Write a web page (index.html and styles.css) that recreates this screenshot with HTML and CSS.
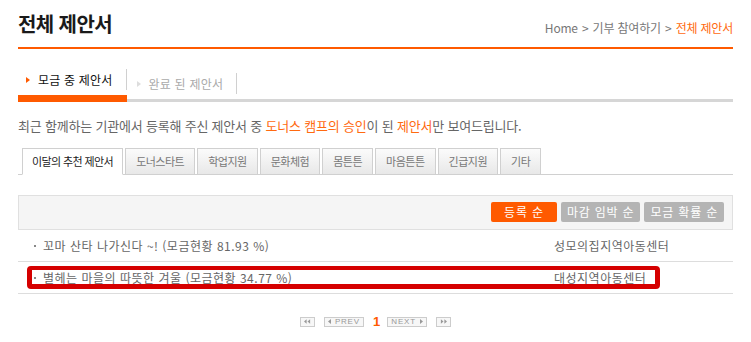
FILE: index.html
```html
<!DOCTYPE html>
<html lang="ko">
<head>
    <meta charset="UTF-8">
    <meta name="viewport" content="width=device-width, initial-scale=1.0">
    <title>전체 제안서</title>
    <link rel="stylesheet" href="styles.css">
</head>
<body>
    <div class="page">
        <div class="head">
            <h1>전체 제안서</h1>
            <p class="path">Home <span class="gt">&gt;</span> 기부 참여하기 <span class="gt">&gt;</span> <em>전체 제안서</em></p>
        </div>

        <ul class="status-tabs">
            <li class="on"><a href="#"><i class="arrow"></i>모금 중 제안서</a></li>
            <li><a href="#"><i class="arrow"></i>완료 된 제안서</a></li>
        </ul>

        <p class="intro">최근 함께하는 기관에서 등록해 주신 제안서 중 <em>도너스 캠프의 승인</em>이 된 <em>제안서</em>만 보여드립니다.</p>

        <ul class="cat-tabs">
            <li class="on"><a href="#">이달의 추천 제안서</a></li>
            <li><a href="#">도너스타트</a></li>
            <li><a href="#">학업지원</a></li>
            <li><a href="#">문화체험</a></li>
            <li><a href="#">몸튼튼</a></li>
            <li><a href="#">마음튼튼</a></li>
            <li><a href="#">긴급지원</a></li>
            <li><a href="#">기타</a></li>
        </ul>

        <div class="sort-bar">
            <button class="sort on">등록 순</button>
            <button class="sort">마감 임박 순</button>
            <button class="sort">모금 확률 순</button>
        </div>

        <ul class="list">
            <li class="row">
                <a class="title" href="#">꼬마 산타 나가신다 ~! (모금현황 81.93 %)</a>
                <span class="org">성모의집지역아동센터</span>
            </li>
            <li class="row hover">
                <a class="title" href="#">별헤는 마을의 따뜻한 겨울 (모금현황 34.77 %)</a>
                <span class="org">대성지역아동센터</span>
                <span class="mark"></span>
            </li>
        </ul>

        <div class="paging">
            <a class="pg-btn first" href="#"><svg width="8" height="5" viewBox="0 0 8 5"><path d="M0 2.5L3 0V5Z M4 2.5L7 0V5Z" fill="#999"/></svg></a>
            <a class="pg-btn word" href="#"><svg width="4" height="5" viewBox="0 0 4 5"><path d="M0 2.5L3 0V5Z" fill="#999"/></svg>PREV</a>
            <strong class="current">1</strong>
            <a class="pg-btn word" href="#">NEXT<svg width="4" height="5" viewBox="0 0 4 5"><path d="M4 2.5L1 0V5Z" fill="#999"/></svg></a>
            <a class="pg-btn last" href="#"><svg width="8" height="5" viewBox="0 0 8 5"><path d="M4 2.5L1 0V5Z M8 2.5L5 0V5Z" fill="#999"/></svg></a>
        </div>
    </div>
</body>
</html>
```

FILE: styles.css
```css
* {
    box-sizing: border-box;
}
body {
    margin: 0;
    background: #fff;
    font-family: "Noto Sans CJK KR", "Noto Sans", sans-serif;
    color: #666;
}
a {
    color: inherit;
    text-decoration: none;
}
ul {
    list-style: none;
    margin: 0;
    padding: 0;
}
em {
    font-style: normal;
    color: #ff6a10;
}
.page {
    padding: 0 18px;
}

/* title + breadcrumb */
.head {
    display: flex;
    justify-content: space-between;
    align-items: flex-start;
    height: 49px;
    padding-top: 10px;
    border-bottom: 2px solid #ff5a00;
}
.head h1 {
    margin: 0;
    font-size: 20px;
    line-height: 28px;
    letter-spacing: -0.6px;
    font-weight: bold;
    color: #1a1a1a;
}
.path {
    margin: 0;
    padding-top: 10px;
    font-size: 12px;
    line-height: 16px;
    color: #777;
    letter-spacing: -0.2px;
}
.path .gt {
    margin: 0 1px;
}

/* 모금 중 / 완료 tabs */
.status-tabs {
    display: flex;
    border-bottom: 3px solid #d6d6d6;
}
.status-tabs li {
    display: flex;
    align-items: flex-end;
    height: 50px;
    padding: 0 0 5px 10px;
}
.status-tabs li.on {
    height: 53px;
    padding-left: 8px;
    border-bottom: 7px solid #ff5a00;
    margin-bottom: -3px;
}
.status-tabs a {
    display: flex;
    align-items: center;
    height: 21px;
    padding-right: 13px;
    border-right: 1px solid #d0d0d0;
    font-size: 12px;
    letter-spacing: 0.2px;
    color: #aaa;
}
.status-tabs li.on a {
    color: #111;
}
.status-tabs .arrow {
    width: 0;
    height: 0;
    margin-right: 8px;
    border-top: 3.5px solid transparent;
    border-bottom: 3.5px solid transparent;
    border-left: 4px solid #ddd;
}
.status-tabs li.on .arrow {
    border-left-color: #ff5a00;
}

.intro {
    margin: 14px 0 12px;
    font-size: 13px;
    line-height: 20px;
    letter-spacing: -0.2px;
    color: #666;
}

/* category tabs */
.cat-tabs {
    display: flex;
    gap: 2px;
    padding-left: 4px;
    border-bottom: 1px solid #d0d0d0;
}
.cat-tabs li {
    margin-bottom: -1px;
}
.cat-tabs a {
    display: block;
    height: 27px;
    padding: 0 10px;
    line-height: 25px;
    font-size: 11px;
    letter-spacing: -0.5px;
    color: #777;
    border: 1px solid #d0d0d0;
    background: linear-gradient(#fbfbfb, #e8e8e8);
}
.cat-tabs li.on a {
    padding: 0 9px;
    letter-spacing: -0.6px;
    color: #222;
    background: #fff;
    border-bottom-color: #fff;
}

/* sort buttons */
.sort-bar {
    display: flex;
    justify-content: flex-end;
    gap: 4px;
    height: 35px;
    margin-top: 20px;
    padding: 6px 8px 0 0;
    background: #f5f5f5;
    border: 1px solid #e0e0e0;
}
.sort {
    height: 20px;
    min-width: 66px;
    padding: 0 6px;
    border: 0;
    border-radius: 2px;
    background: #b4b4b4;
    color: #fff;
    font-family: "Noto Sans CJK KR", sans-serif;
    font-size: 12px;
    line-height: 20px;
    letter-spacing: 0.8px;
    cursor: pointer;
}
.sort.on {
    background: #ff5a00;
}

/* list */
.row {
    position: relative;
    display: grid;
    grid-template-columns: 1fr 179px;
    align-items: center;
    height: 32px;
    padding-left: 25px;
    border-bottom: 1px solid #ddd;
    font-size: 12px;
    letter-spacing: 0.5px;
    color: #666;
}
.row .title::before {
    content: "";
    position: absolute;
    left: 16px;
    top: 15px;
    width: 2px;
    height: 2px;
    background: #888;
}
.row.hover .title,
.row.hover .org {
    text-decoration: underline;
    text-underline-offset: 1px;
}
.row .mark {
    position: absolute;
    left: 9px;
    top: 4px;
    width: 633px;
    height: 23px;
    border: 5px solid #d50000;
    border-top-width: 4px;
    border-radius: 4px;
}

/* paging */
.paging {
    display: flex;
    justify-content: center;
    align-items: center;
    gap: 9px;
    margin-top: 20px;
}
.pg-btn {
    display: flex;
    align-items: center;
    justify-content: center;
    gap: 3px;
    height: 10px;
    padding: 0 3px;
    border: 1px solid #ccc;
    background: #f7f7f7;
    font-family: "Liberation Sans", sans-serif;
    font-size: 8px;
    letter-spacing: 0.8px;
    color: #999;
}
.pg-btn.first,
.pg-btn.last {
    width: 15px;
}
.pg-btn.word {
    width: 40px;
}
.current {
    margin: 0 -2px 0 0;
    font-family: "Liberation Sans", sans-serif;
    font-size: 13px;
    color: #ff5a00;
}
```
